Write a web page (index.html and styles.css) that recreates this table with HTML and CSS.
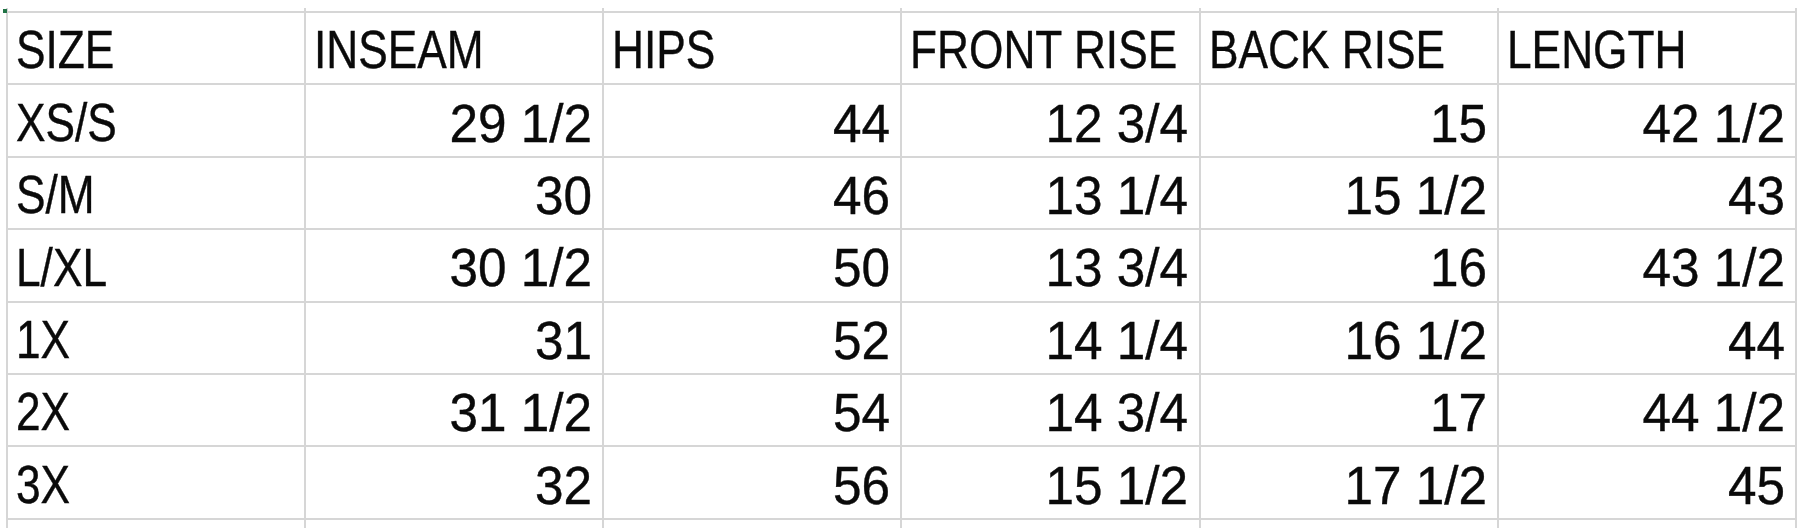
FILE: index.html
```html
<!DOCTYPE html>
<html lang="en">
<head>
<meta charset="utf-8">
<title>Size chart</title>
<link rel="stylesheet" href="styles.css">
</head>
<body>
<div class="sheet">
  <span class="cursor-mark"></span>
  <div class="grid">
    <div class="cell"></div><div class="cell"></div><div class="cell"></div>
    <div class="cell"></div><div class="cell"></div><div class="cell"></div>

    <div class="cell label"><span class="txt">SIZE</span></div>
    <div class="cell label"><span class="txt">INSEAM</span></div>
    <div class="cell label"><span class="txt">HIPS</span></div>
    <div class="cell label"><span class="txt">FRONT RISE</span></div>
    <div class="cell label"><span class="txt">BACK RISE</span></div>
    <div class="cell label"><span class="txt">LENGTH</span></div>

    <div class="cell label"><span class="txt">XS/S</span></div>
    <div class="cell num"><span class="txt">29 1/2</span></div>
    <div class="cell num"><span class="txt">44</span></div>
    <div class="cell num"><span class="txt">12 3/4</span></div>
    <div class="cell num"><span class="txt">15</span></div>
    <div class="cell num"><span class="txt">42 1/2</span></div>

    <div class="cell label"><span class="txt">S/M</span></div>
    <div class="cell num"><span class="txt">30</span></div>
    <div class="cell num"><span class="txt">46</span></div>
    <div class="cell num"><span class="txt">13 1/4</span></div>
    <div class="cell num"><span class="txt">15 1/2</span></div>
    <div class="cell num"><span class="txt">43</span></div>

    <div class="cell label"><span class="txt">L/XL</span></div>
    <div class="cell num"><span class="txt">30 1/2</span></div>
    <div class="cell num"><span class="txt">50</span></div>
    <div class="cell num"><span class="txt">13 3/4</span></div>
    <div class="cell num"><span class="txt">16</span></div>
    <div class="cell num"><span class="txt">43 1/2</span></div>

    <div class="cell label"><span class="txt">1X</span></div>
    <div class="cell num"><span class="txt">31</span></div>
    <div class="cell num"><span class="txt">52</span></div>
    <div class="cell num"><span class="txt">14 1/4</span></div>
    <div class="cell num"><span class="txt">16 1/2</span></div>
    <div class="cell num"><span class="txt">44</span></div>

    <div class="cell label"><span class="txt">2X</span></div>
    <div class="cell num"><span class="txt">31 1/2</span></div>
    <div class="cell num"><span class="txt">54</span></div>
    <div class="cell num"><span class="txt">14 3/4</span></div>
    <div class="cell num"><span class="txt">17</span></div>
    <div class="cell num"><span class="txt">44 1/2</span></div>

    <div class="cell label"><span class="txt">3X</span></div>
    <div class="cell num"><span class="txt">32</span></div>
    <div class="cell num"><span class="txt">56</span></div>
    <div class="cell num"><span class="txt">15 1/2</span></div>
    <div class="cell num"><span class="txt">17 1/2</span></div>
    <div class="cell num"><span class="txt">45</span></div>

    <div class="cell"></div><div class="cell"></div><div class="cell"></div>
    <div class="cell"></div><div class="cell"></div><div class="cell"></div>
  </div>
</div>
</body>
</html>
```

FILE: styles.css
```css
html, body {
  margin: 0;
  padding: 0;
  background: #ffffff;
}

body {
  width: 1800px;
  height: 528px;
  overflow: hidden;
}

.sheet {
  position: relative;
  padding: 8px 0 0 5.5px;
}

.cursor-mark {
  position: absolute;
  left: 3px;
  top: 9px;
  width: 4px;
  height: 4px;
  background: #217346;
}

.grid {
  display: grid;
  grid-template-columns: repeat(6, 296.25px);
  grid-template-rows: 3px repeat(7, 70.4px) 14px;
  gap: 2px;
  padding: 0 2px 2px 2px;
  width: max-content;
  background: #d6d6d6;
}

.cell {
  background: #ffffff;
  display: flex;
  align-items: flex-end;
  padding: 0 10px 2px 8px;
  color: #0a0a0a;
  font-family: "Liberation Sans", Arial, sans-serif;
  line-height: 1.15;
  white-space: nowrap;
  -webkit-text-stroke: 0.4px #0a0a0a;
}

.txt {
  display: inline-block;
}

.label {
  font-size: 53px;
  justify-content: flex-start;
}

.label .txt {
  transform: scaleX(0.835);
  transform-origin: left bottom;
}

.num {
  font-size: 54px;
  justify-content: flex-end;
}

.num .txt {
  transform: scaleX(0.95);
  transform-origin: right bottom;
}
```
